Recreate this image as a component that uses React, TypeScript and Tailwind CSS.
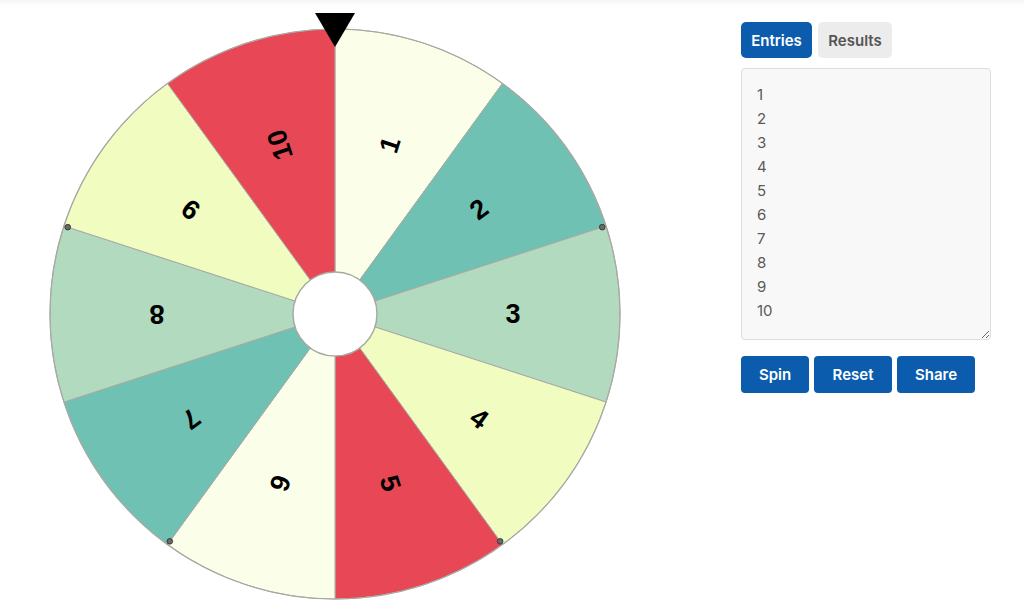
import React from "react";

const CX = 335;
const CY = 314;
const R = 285;
const colors = [
  "#fbffea",
  "#6fc1b3",
  "#b2dabf",
  "#f1fdc0",
  "#e84855",
  "#fbffea",
  "#6fc1b3",
  "#b2dabf",
  "#f1fdc0",
  "#e84855",
];

function pt(angleDeg: number, r: number) {
  const a = (angleDeg * Math.PI) / 180;
  return [CX + r * Math.sin(a), CY - r * Math.cos(a)];
}

function Wheel() {
  const n = 10;
  const step = 360 / n;
  return (
    <svg width={670} height={611} viewBox="0 0 670 611" className="block">
      {colors.map((c, i) => {
        const a0 = i * step;
        const a1 = (i + 1) * step;
        const [x0, y0] = pt(a0, R);
        const [x1, y1] = pt(a1, R);
        return (
          <path
            key={i}
            d={`M ${CX} ${CY} L ${x0} ${y0} A ${R} ${R} 0 0 1 ${x1} ${y1} Z`}
            fill={c}
            stroke="#a9a9a3"
            strokeWidth={1}
          />
        );
      })}
      <circle cx={CX} cy={CY} r={R} fill="none" stroke="#a9a9a3" strokeWidth={1.2} />
      {Array.from({ length: n }).map((_, i) => {
        const mid = i * step + step / 2;
        const [tx, ty] = pt(mid, 178);
        return (
          <text
            key={i}
            x={tx}
            y={ty}
            transform={`rotate(${mid - 90} ${tx} ${ty})`}
            textAnchor="middle"
            dominantBaseline="central"
            fontFamily="'Liberation Sans', Arial, sans-serif"
            fontWeight={700}
            fontSize={27}
            fill="#000"
          >
            {i + 1}
          </text>
        );
      })}
      {[72, 144, 216, 288].map((a) => {
        const [x, y] = pt(a, 281);
        return <circle key={a} cx={x} cy={y} r={2.8} fill="#6a6a6a" stroke="#333" strokeWidth={0.9} />;
      })}
      <circle cx={CX} cy={CY} r={42} fill="#fff" stroke="#a9a9a3" strokeWidth={1.5} />
      <polygon points={`${CX - 20},13 ${CX + 20},13 ${CX},47`} fill="#000" />
    </svg>
  );
}

export default function App() {
  const entries = Array.from({ length: 10 }, (_, i) => String(i + 1)).join("\n");
  return (
    <div
      className="w-[1024px] h-[611px] bg-white flex shadow-[inset_0_7px_6px_-6px_rgba(0,0,0,0.07)] overflow-hidden"
      style={{ fontFamily: "Inter, 'Noto Sans', sans-serif" }}
    >
      <Wheel />
      <div className="ml-[71px] pt-[22px] flex flex-col">
        <div className="flex gap-[6px]">
          <button className="h-[36px] w-[71px] pt-[2px] rounded-[5px] bg-[#0b5cad] text-white text-[15px] font-semibold">
            Entries
          </button>
          <button className="h-[36px] w-[74px] pt-[2px] rounded-[5px] bg-[#ececec] text-[#555] text-[15px] font-semibold">
            Results
          </button>
        </div>
        <textarea
          readOnly
          value={entries}
          className="mt-[10px] w-[250px] h-[272px] rounded-[4px] border border-[#dedede] bg-[#f8f8f8] pl-[15px] pt-[14px] text-[15px] leading-[24px] text-[#5a5a5a] outline-none"
        />
        <div className="mt-[16px] flex gap-[5px]">
          <button className="h-[37px] w-[68px] pt-[2px] rounded-[4px] bg-[#0b5cad] text-white text-[15px] font-semibold">
            Spin
          </button>
          <button className="h-[37px] w-[78px] pt-[2px] rounded-[4px] bg-[#0b5cad] text-white text-[15px] font-semibold">
            Reset
          </button>
          <button className="h-[37px] w-[78px] pt-[2px] rounded-[4px] bg-[#0b5cad] text-white text-[15px] font-semibold">
            Share
          </button>
        </div>
      </div>
    </div>
  );
}
